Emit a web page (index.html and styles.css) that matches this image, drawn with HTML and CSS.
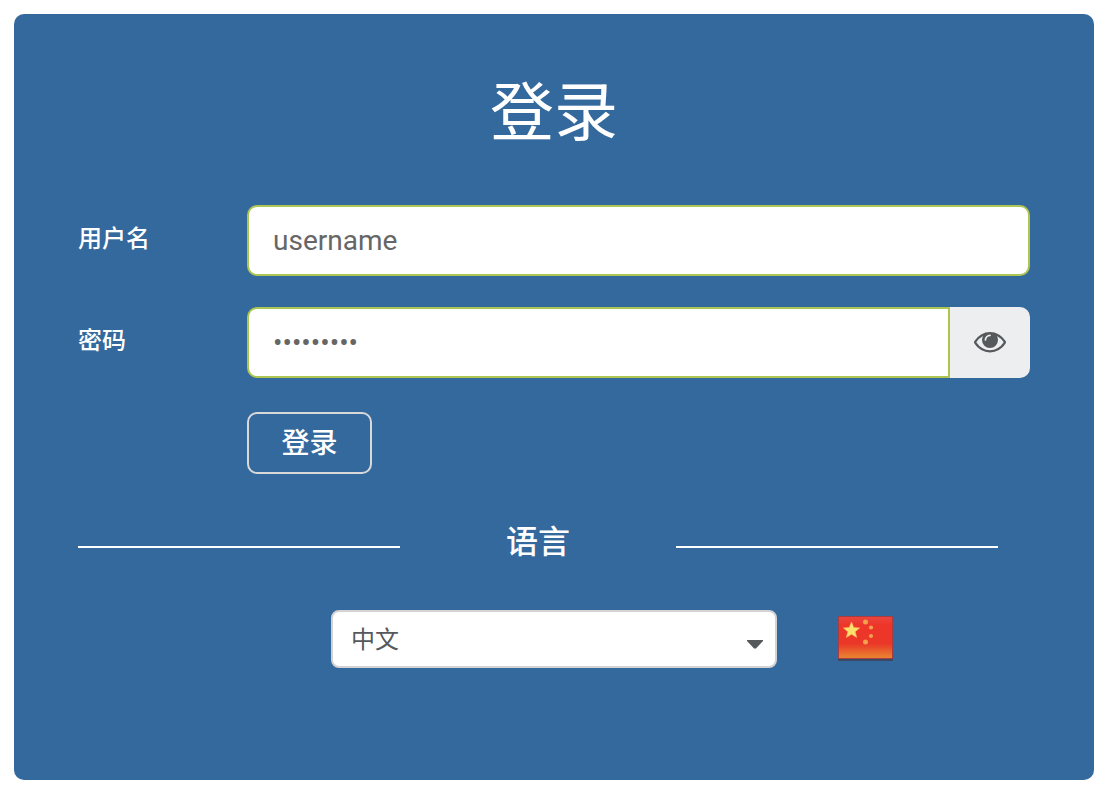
FILE: index.html
```html
<!DOCTYPE html>
<html lang="zh-CN">
<head>
    <meta charset="UTF-8">
    <meta name="viewport" content="width=device-width, initial-scale=1.0">
    <title>登录</title>
    <link rel="stylesheet" href="styles.css">
</head>
<body>
    <main class="login">
        <h1>登录</h1>
        <form>
            <div class="row">
                <label for="username">用户名</label>
                <input type="text" id="username" class="field" value="username">
            </div>
            <div class="row">
                <label for="password">密码</label>
                <div class="input-group">
                    <input type="password" id="password" class="field" value="password1">
                    <button type="button" class="toggle" aria-label="显示密码" onclick="togglePassword()">
                        <svg viewBox="0 0 1792 1152" aria-hidden="true"><path fill="currentColor" d="M1664 576q-152-236-381-353 61 104 61 225 0 185-131.5 316.5t-316.5 131.5-316.5-131.5-131.5-316.5q0-121 61-225-229 117-381 353 133 205 333.500 326.500t434.500 121.500 434.500-121.500 333.500-326.500zm-720-384q0-20-14-34t-34-14q-125 0-214.500 89.500t-89.500 214.500q0 20 14 34t34 14 34-14 14-34q0-86 61-147t147-61q20 0 34-14t14-34zm848 384q0 34-20 69-140 230-376.500 368.500t-499.500 138.500-499.500-139-376.500-368q-20-35-20-69t20-69q140-229 376.500-368t499.500-139 499.500 139 376.500 368q20 35 20 69z"/></svg>
                    </button>
                </div>
            </div>
            <button type="submit" class="submit">登录</button>
        </form>

        <h2 class="divider"><label for="language">语言</label></h2>
        <div class="language">
            <div class="select">
                <select id="language">
                    <option>中文</option>
                </select>
                <svg class="caret" viewBox="0 0 16 9" aria-hidden="true"><path fill="currentColor" d="M0 0h16v1L9 8.500H7L0 1z"/></svg>
            </div>
            <svg class="flag" viewBox="0 0 55 45" role="img" aria-label="中国">
                <defs>
                    <linearGradient id="red" x1="0" y1="0" x2="0" y2="1">
                        <stop offset="0" stop-color="#e9453c"/>
                        <stop offset=".2" stop-color="#ee352a"/>
                        <stop offset=".65" stop-color="#ea3728"/>
                        <stop offset="1" stop-color="#e98530"/>
                    </linearGradient>
                </defs>
                <rect y="1" width="55" height="44" rx="1" fill="#3c4965"/>
                <rect x="0" y="0" width="55" height="43" rx="1" fill="#a73c43"/>
                <rect x="1" y="1" width="53" height="41" fill="url(#red)"/>
                <path fill="#fbe16c" stroke="#f6b45a" stroke-width=".6" d="M13.500 6l2.300 5.500 5.900.4-4.500 3.800 1.500 5.800-5.200-3.200-5.200 3.200 1.500-5.800-4.500-3.800 5.900-.4z"/>
                <g fill="#f2a04a">
                    <circle cx="27.500" cy="6" r="2.500"/>
                    <circle cx="33" cy="11.500" r="2.100"/>
                    <circle cx="33" cy="20" r="2.100"/>
                    <circle cx="27.500" cy="26" r="2.500"/>
                </g>
            </svg>
        </div>
    </main>

    <script>
        function togglePassword() {
            var field = document.getElementById("password");
            field.type = field.type === "password" ? "text" : "password";
        }
    </script>
</body>
</html>
```
FILE: styles.css
```css
* {
    box-sizing: border-box;
}
body {
    margin: 14px;
    font-family: Roboto, "Noto Sans CJK SC", sans-serif;
    font-size: 24px;
    color: #fff;
}
input, button, select {
    font-family: inherit;
}
.login {
    padding: 52px 64px 112px;
    border-radius: 10px;
    background-color: #34699d;
}
h1 {
    margin: 0 0 43px;
    font-size: 64px;
    font-weight: 400;
    line-height: 96px;
    text-align: center;
}
.row {
    display: grid;
    grid-template-columns: 169px 1fr;
    margin-bottom: 31px;
}
.row label {
    padding-top: 16px;
    font-weight: 500;
    line-height: 36px;
}
.field {
    width: 100%;
    height: 71px;
    padding: 0 24px;
    border: 2px solid #adc551;
    border-radius: 10px;
    background-color: #fff;
    font-size: 28px;
    color: #666;
}
.input-group {
    display: flex;
}
.input-group .field {
    flex: 1;
    min-width: 0;
    border-radius: 10px 0 0 10px;
}
.toggle {
    display: flex;
    align-items: center;
    justify-content: center;
    width: 80px;
    padding: 0;
    border: 0;
    border-radius: 0 10px 10px 0;
    background-color: #eceeef;
    color: #55595c;
}
.toggle svg {
    width: 32px;
}
.submit {
    min-width: 125px;
    height: 62px;
    margin: 3px 0 0 169px;
    padding: 0 32px 4px;
    border: 2px solid #d9d9d9;
    border-radius: 10px;
    background: none;
    font-size: 28px;
    font-weight: 500;
    color: #fff;
}
.divider {
    display: grid;
    grid-template-columns: 7fr 6fr 7fr;
    align-items: center;
    margin: 44px 32px 0 0;
    font-size: 32px;
    font-weight: 500;
    line-height: 48px;
    text-align: center;
}
.divider::before,
.divider::after {
    content: "";
    height: 2px;
    margin-top: 10px;
    background-color: #fff;
}
.language {
    display: flex;
    align-items: center;
    justify-content: center;
    margin-top: 44px;
}
.select {
    position: relative;
    width: 446px;
    margin-left: 116px;
}
.select select {
    width: 100%;
    height: 58px;
    padding: 2px 18px 0;
    border: 2px solid #d3d3d5;
    border-radius: 8px;
    background-color: #fff;
    font-size: 24px;
    color: #55595c;
    appearance: none;
}
.caret {
    position: absolute;
    top: 30px;
    right: 14px;
    width: 16px;
    color: #55595c;
    pointer-events: none;
}
.flag {
    width: 55px;
    margin: 0 0 2px 61px;
}
```
